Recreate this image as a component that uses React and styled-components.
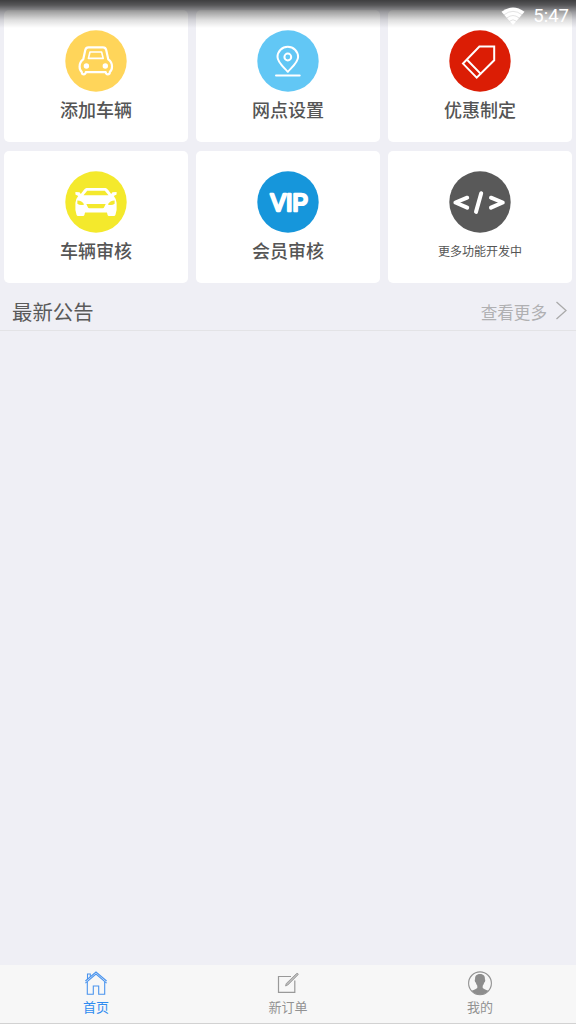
import React from 'react';
import styled, { createGlobalStyle } from 'styled-components';

const GlobalStyle = createGlobalStyle`
  * {
    box-sizing: border-box;
  }

  body {
    margin: 0;
    background: #efeff5;
    font-family: 'Noto Sans CJK SC', sans-serif;
  }
`;

const Page = styled.div`
  position: relative;
  display: flex;
  flex-direction: column;
  height: 1024px;
  padding-top: 10px;
  overflow: hidden;
  background: #efeff5;
`;

const StatusBar = styled.div`
  position: absolute;
  top: 0;
  left: 0;
  right: 0;
  height: 30px;
  padding: 1px 7px 0 0;
  display: flex;
  align-items: center;
  justify-content: flex-end;
  gap: 8px;
  color: #fff;
  background: linear-gradient(
    rgba(0, 0, 0, 0.74) 0,
    rgba(0, 0, 0, 0.64) 5px,
    rgba(0, 0, 0, 0.36) 12px,
    rgba(0, 0, 0, 0.13) 20px,
    transparent 28px
  );
`;

const Clock = styled.span`
  font: 400 18.5px/30px Roboto, sans-serif;
`;

const MenuGrid = styled.main`
  display: grid;
  grid-template-columns: repeat(3, 1fr);
  grid-auto-rows: 132px;
  gap: 9px 8px;
  padding: 0 4px;
`;

const MenuCard = styled.div`
  display: flex;
  flex-direction: column;
  align-items: center;
  padding-top: 20px;
  border-radius: 5px;
  background: #fff;

  svg {
    display: block;
  }
`;

const MenuLabel = styled.span`
  color: #555;
  font-size: ${({ $small }) => ($small ? '12px' : '18px')};
  font-weight: ${({ $small }) => ($small ? 400 : 500)};
  line-height: ${({ $small }) => ($small ? '36px' : '34px')};
`;

const NoticeHeader = styled.section`
  display: flex;
  align-items: center;
  justify-content: space-between;
  height: 48px;
  padding: 9px 8px 0 12px;
  border-bottom: 1px solid #e3e3e6;
`;

const NoticeTitle = styled.h2`
  margin: 0;
  color: #5a5a5a;
  font-size: 20.4px;
  font-weight: 400;
  line-height: 30px;
`;

const MoreLink = styled.span`
  display: flex;
  align-items: center;
  gap: 8px;
  color: #b0b0b2;
  font-size: 16.6px;
  line-height: 30px;
`;

const MoreText = styled.span`
  padding-top: 2px;
`;

const TabBar = styled.nav`
  display: grid;
  grid-template-columns: repeat(3, 1fr);
  height: 59px;
  margin-top: auto;
  background: #f7f7f7;
  border-bottom: 1px solid #d2d2d2;
`;

const Tab = styled.div`
  display: flex;
  flex-direction: column;
  align-items: center;
  padding-top: 5px;
  color: ${({ $active }) => ($active ? '#2f8cf0' : '#929292')};
  font-size: 13px;
  line-height: 20px;

  svg {
    display: block;
  }
`;

const Badge = ({ color, children }) => (
  <svg
    width="62"
    height="62"
    viewBox="0 0 62 62"
    fill="none"
    stroke="#fff"
    strokeWidth="2"
    strokeLinecap="round"
    strokeLinejoin="round"
  >
    <circle cx="31" cy="31" r="30.7" fill={color} stroke="none" />
    {children}
  </svg>
);

const AddCarIcon = () => (
  <Badge color="#ffd55a">
    <path
      strokeWidth="2.2"
      d="M23.5 17.4H38Q40.6 17.4 41.2 20L43.3 29.4Q47 32 47 36.5Q47 40.4 44.8 42V42.6Q44.6 44.4 42.8 44.4Q41 44.4 40.7 42.2H20.8Q20.5 44.4 18.8 44.4Q17 44.4 16.8 42.6V42Q14.6 40.4 14.6 36.5Q14.6 32 18.2 29.4L20.3 20Q20.9 17.4 23.5 17.4Z"
    />
    <path d="M25 22H36.6L38.2 28.4H23.4Z" strokeWidth="1.6" />
    <circle cx="21.4" cy="36" r="2.7" fill="#fff" stroke="none" />
    <circle cx="40.3" cy="36" r="2.7" fill="#fff" stroke="none" />
  </Badge>
);

const LocationIcon = () => (
  <Badge color="#62c7f5">
    <path d="M30.8 41.8C27 37.4 20.5 32.4 20.5 27A10.3 10.3 0 0 1 41.1 27C41.1 32.4 34.6 37.4 30.8 41.8Z" />
    <circle cx="30.8" cy="27" r="3.4" />
    <path d="M19 45.4H42.7" />
  </Badge>
);

const DiscountIcon = () => (
  <Badge color="#db1d05">
    <path d="M30.4 16.5H45.2V30.3L27.7 47.7L14 33.6Z" strokeLinejoin="miter" />
    <path d="M18 29.8L31.5 43.6" />
  </Badge>
);

const CarAuditIcon = () => (
  <Badge color="#f4e92c">
    <g stroke="none" transform="translate(0 0.9)">
      <path
        fill="#fff"
        d="M21.5 16.2H40.5Q42.2 16.6 43.2 18L46.2 22L47.5 20.3L51.6 20V22.6L48.8 24.2Q51.6 27.5 51.6 31V38L50.4 43Q50 44 49 44H44Q42.8 44 42.6 43L42 40.7H20L19.4 43Q19.2 44 18 44H13Q12 44 11.6 43L10.4 38V31Q10.4 27.5 13.2 24.2L10.4 22.6V20L14.5 20.3L15.8 22L18.8 18Q19.8 16.6 21.5 16.2Z"
      />
      <g fill="#f4e92c">
        <path d="M22.2 18.8H39.8L43.5 23.4H18.5Z" />
        <path d="M12.4 28.5Q17 28.7 19.2 32.5Q15 33.8 12.4 31.8Z" />
        <path d="M49.6 28.5Q45 28.7 42.8 32.5Q47 33.8 49.6 31.8Z" />
        <path d="M21.3 32H40.7L39 35.6Q38.8 36.4 37.8 36.4H24.2Q23.2 36.4 23 35.6Z" />
      </g>
    </g>
  </Badge>
);

const VipIcon = () => (
  <Badge color="#1696db">
    <text
      x="13.6"
      y="40"
      textLength="37.4"
      lengthAdjust="spacingAndGlyphs"
      fill="#fff"
      strokeWidth="2.5"
      fontFamily="Liberation Sans, sans-serif"
      fontSize="23"
    >
      VIP
    </text>
  </Badge>
);

const CodeIcon = () => (
  <Badge color="#595959">
    <g strokeWidth="4" transform="translate(-0.4 0.9)">
      <path d="M18.6 25.8L6.8 30.6L18.6 35.8" />
      <path d="M32.6 21.3L27.4 40" />
      <path d="M42.4 25.8L54.2 30.6L42.4 35.8" />
    </g>
  </Badge>
);

const WifiIcon = () => (
  <svg width="24" height="18" viewBox="0 0 24 18">
    <path d="M0.5 4.8Q12 -3.8 23.5 4.8L12 18Z" fill="#fff" />
    <g fill="none" stroke="#999" strokeOpacity="0.4" strokeWidth="0.7">
      <path d="M3 7.8Q12 0.9 21 7.8" />
      <path d="M5.8 11Q12 6 18.2 11" />
      <path d="M8.6 14.2Q12 11.3 15.4 14.2" />
    </g>
  </svg>
);

const ChevronIcon = () => (
  <svg width="13" height="20" viewBox="0 0 13 20" fill="none" stroke="#aaa" strokeWidth="1.3">
    <path d="M1.5 1L11 9.5L1.5 18" />
  </svg>
);

const HomeIcon = () => (
  <svg width="26" height="27" viewBox="0 0 26 27" fill="none" stroke="#4a94ee" strokeWidth="1.1">
    <path d="M2.4 13.2L13 4L23.6 13.2" />
    <path d="M2.4 11L13 2L23.6 11" />
    <path d="M4.5 9V4H7.3V6.7" />
    <path d="M4.3 12V24.2H10.3V16H15.7V24.2H21.7V12" />
  </svg>
);

const OrderIcon = () => (
  <svg width="26" height="27" viewBox="0 0 26 27" fill="none" stroke="#999" strokeWidth="1.2">
    <path d="M16 6.5H3.5V22.3H19.8V10.5" />
    <path d="M10.6 16L11.2 13.6L21.7 3.4Q23.2 3 23.2 4.6L12.8 15Z" fill="#bbb" strokeWidth="0.9" />
  </svg>
);

const ProfileIcon = () => (
  <svg width="26" height="27" viewBox="0 0 26 27">
    <circle cx="13" cy="13.3" r="11.4" fill="none" stroke="#929292" strokeWidth="1.1" />
    <path
      fill="#8d8d8d"
      d="M13 4C16.8 4 18.2 6.3 17.9 9.2Q18.6 9.7 18.1 11.2Q17.8 12.4 17.2 12.6Q16.8 14.7 15.7 15.8V18Q16.8 19 21.4 20.8Q17.8 24.7 13 24.7Q8.2 24.7 4.6 20.8Q9.2 19 10.3 18V15.8Q9.2 14.7 8.8 12.6Q8.2 12.4 7.9 11.2Q7.4 9.7 8.1 9.2C7.8 6.3 9.2 4 13 4Z"
    />
  </svg>
);

const menuItems = [
  { label: '添加车辆', icon: AddCarIcon },
  { label: '网点设置', icon: LocationIcon },
  { label: '优惠制定', icon: DiscountIcon },
  { label: '车辆审核', icon: CarAuditIcon },
  { label: '会员审核', icon: VipIcon },
  { label: '更多功能开发中', icon: CodeIcon, small: true }
];

const tabs = [
  { label: '首页', icon: HomeIcon, active: true },
  { label: '新订单', icon: OrderIcon },
  { label: '我的', icon: ProfileIcon }
];

const App = () => {
  return (
    <Page>
      <GlobalStyle />

      <MenuGrid>
        {menuItems.map(({ label, icon: Icon, small }) => (
          <MenuCard key={label}>
            <Icon />
            <MenuLabel $small={small}>{label}</MenuLabel>
          </MenuCard>
        ))}
      </MenuGrid>

      <NoticeHeader>
        <NoticeTitle>最新公告</NoticeTitle>
        <MoreLink>
          <MoreText>查看更多</MoreText>
          <ChevronIcon />
        </MoreLink>
      </NoticeHeader>

      <TabBar>
        {tabs.map(({ label, icon: Icon, active }) => (
          <Tab key={label} $active={active}>
            <Icon />
            {label}
          </Tab>
        ))}
      </TabBar>

      {/* Translucent status bar sits on top of the scrolled cards */}
      <StatusBar>
        <WifiIcon />
        <Clock>5:47</Clock>
      </StatusBar>
    </Page>
  );
};

export default App;
